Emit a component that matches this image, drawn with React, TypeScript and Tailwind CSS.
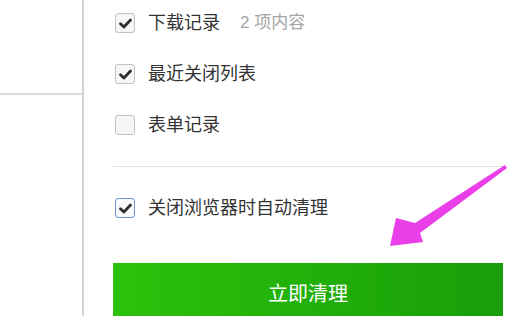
import React from 'react';

interface RowProps {
  label: string;
  checked: boolean;
  focused?: boolean;
  extra?: string;
}

const CheckBox: React.FC<{ checked: boolean; focused?: boolean }> = ({ checked, focused }) => (
  <span
    className={`flex h-[20px] w-[20px] shrink-0 items-center justify-center rounded-[3px] ${
      focused ? 'border-[1.5px] border-[#6b98dc] bg-[#fafafa]' : 'border border-[#c2c2c2] bg-[#f6f6f6]'
    }`}
  >
    {checked && (
      <svg width="15" height="15" viewBox="0 0 14 14" fill="none">
        <path d="M2.3 7.3 L5.5 10.3 L11.7 3.7" stroke="#2f2f2f" strokeWidth="2.6" strokeLinecap="round" strokeLinejoin="round" />
      </svg>
    )}
  </span>
);

const Row: React.FC<RowProps> = ({ label, checked, focused, extra }) => (
  <div className="flex items-center pl-[2px]">
    <CheckBox checked={checked} focused={focused} />
    <span className="ml-[13px] text-[18px] leading-[20px] text-[#333]">{label}</span>
    {extra && <span className="ml-[20px] text-[17px] leading-[20px] text-[#a6a6a6]">{extra}</span>}
  </div>
);

export default function App() {
  return (
    <div
      className="relative flex h-[316px] w-[512px] overflow-hidden bg-white"
      style={{ fontFamily: '"Liberation Sans", "Noto Sans CJK SC", sans-serif' }}
    >
      {/* left sidebar */}
      <div className="w-[82px] shrink-0">
        <div className="h-[95px] border-b-2 border-[#dcdcdc]" />
      </div>
      <div className="w-[2px] shrink-0 bg-[#d2d2d2]" />

      {/* options panel */}
      <div className="flex w-[390px] flex-col pl-[29px] pt-[13px] box-content">
        <div className="flex flex-col gap-[31px]">
          <Row label="下载记录" checked extra="2 项内容" />
          <Row label="最近关闭列表" checked />
          <Row label="表单记录" checked={false} />
        </div>
        <div className="mt-[31px] h-px shrink-0 bg-[#e3e3e3]" />
        <div className="mt-[31px]">
          <Row label="关闭浏览器时自动清理" checked focused />
        </div>
        <button className="mt-[45px] flex h-[62px] w-[390px] shrink-0 items-center justify-center bg-gradient-to-r from-[#2bc20b] to-[#189e09] text-[20px] text-white">
          立即清理
        </button>
      </div>

      {/* annotation arrow */}
      <svg className="absolute left-0 top-0" width="512" height="316" viewBox="0 0 512 316">
        <polygon
          points="505,165 415,223 396,218 390,246 423,242 420,233 507,168"
          fill="#ea3ee9"
        />
      </svg>
    </div>
  );
}
